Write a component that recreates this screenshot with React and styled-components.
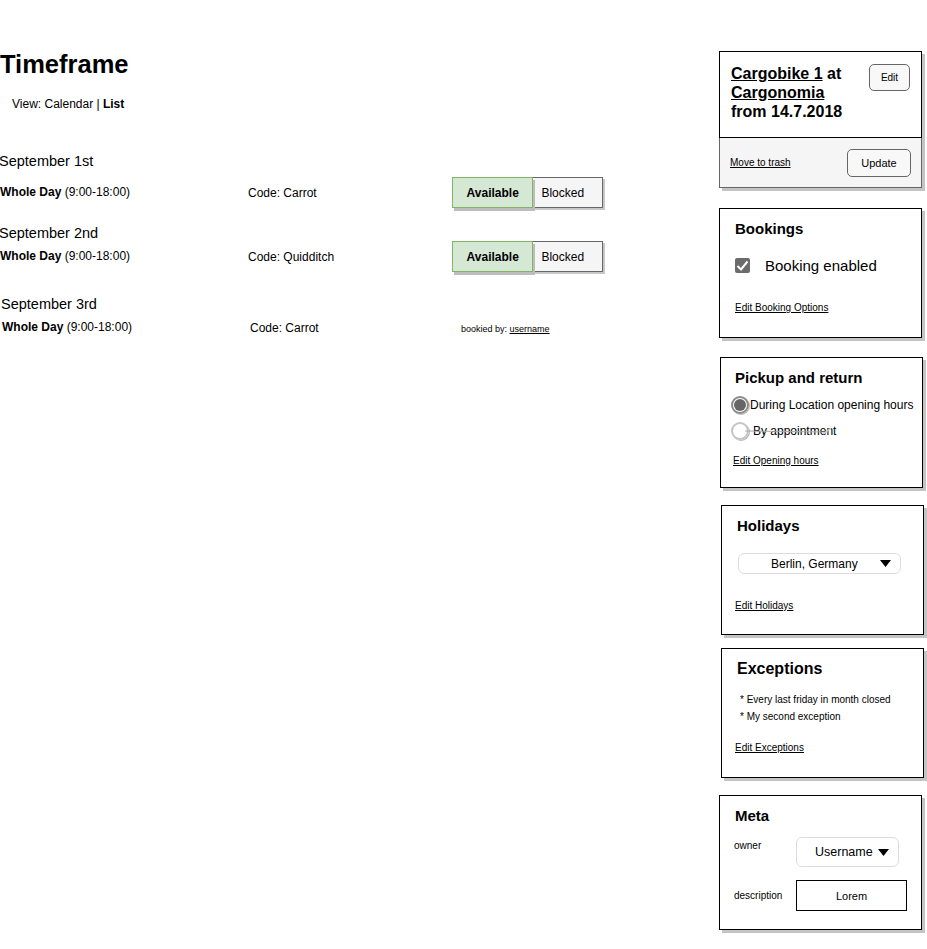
import React from "react";
import styled, { createGlobalStyle } from "styled-components";

const GlobalStyle = createGlobalStyle`
    html, body {
        margin: 0;
        padding: 0;
        background: #fff;
    }
    body {
        font-family: "Liberation Sans", Arial, Helvetica, sans-serif;
        color: #000;
    }
`;

const days = [
    { title: "September 1st", code: "Carrot", status: "toggle", top: 41, gap: 8, shift: 0 },
    { title: "September 2nd", code: "Quidditch", status: "toggle", top: 17, gap: 0, shift: 0 },
    { title: "September 3rd", code: "Carrot", status: "booked", top: 24, gap: 0, shift: 2 },
];

function Arrow() {
    return (
        <svg width="11" height="7" viewBox="0 0 11 7">
            <polygon points="0,0 11,0 5.5,7" fill="#000" />
        </svg>
    );
}

function App() {
    return (
        <>
            <GlobalStyle />
            <Page>
                <Main>
                    <Title>Timeframe</Title>
                    <ViewSwitch>
                        View: Calendar | <b>List</b>
                    </ViewSwitch>
                    {days.map((d) => (
                        <Day key={d.title} top={d.top}>
                            <DayTitle shift={d.shift}>{d.title}</DayTitle>
                            <DayRow gap={d.gap} shift={d.shift}>
                                <Slot>
                                    <b>Whole Day</b> (9:00-18:00)
                                </Slot>
                                <Code>Code: {d.code}</Code>
                                {d.status === "toggle" ? (
                                    <Toggle>
                                        <ToggleOption active>Available</ToggleOption>
                                        <ToggleOption>Blocked</ToggleOption>
                                    </Toggle>
                                ) : (
                                    <Booked>
                                        bookied by: <u>username</u>
                                    </Booked>
                                )}
                            </DayRow>
                        </Day>
                    ))}
                </Main>
                <Sidebar>
                    <ItemPanel>
                        <ItemHead>
                            <ItemTitle>
                                <u>Cargobike 1</u> at
                                <br />
                                <u>Cargonomia</u>
                                <br />
                                from 14.7.2018
                            </ItemTitle>
                            <SmallButton w={41} h={27}>Edit</SmallButton>
                        </ItemHead>
                        <ItemFoot>
                            <Link>Move to trash</Link>
                            <SmallButton w={64} h={28} size={11}>Update</SmallButton>
                        </ItemFoot>
                    </ItemPanel>

                    <Panel top={20} shift={0} h={130}>
                        <PanelTitle>Bookings</PanelTitle>
                        <CheckRow>
                            <CheckBox>
                                <svg width="13" height="11" viewBox="0 0 13 11">
                                    <path d="M1.5 6 L5 9.5 L11.5 1.5" fill="none" stroke="#fff" strokeWidth="2" />
                                </svg>
                            </CheckBox>
                            Booking enabled
                        </CheckRow>
                        <Link top={27}>Edit Booking Options</Link>
                    </Panel>

                    <Panel top={19} shift={1} h={131} pad={14}>
                        <PanelTitle>Pickup and return</PanelTitle>
                        <RadioRow top={9}>
                            <Radio checked />
                            During Location opening hours
                        </RadioRow>
                        <RadioRow top={8} gap={4}>
                            <Radio />
                            By appointment
                            <Connector width="90" height="10" viewBox="0 0 90 10">
                                <path d="M0 6 L84 7" stroke="#aaa" strokeWidth="1" fill="none" />
                                <path d="M78 9 L86 3" stroke="#ccc" strokeWidth="1.5" fill="none" />
                            </Connector>
                        </RadioRow>
                        <Link top={15} left={-2}>Edit Opening hours</Link>
                    </Panel>

                    <Panel top={17} shift={2} h={130}>
                        <PanelTitle>Holidays</PanelTitle>
                        <Select w={163} h={21} top={18} left={1} textLeft={32} size={12}>
                            <span>Berlin, Germany</span>
                            <Arrow />
                        </Select>
                        <Link top={26} left={-2}>Edit Holidays</Link>
                    </Panel>

                    <Panel top={13} shift={2} h={130}>
                        <PanelTitle size={16}>Exceptions</PanelTitle>
                        <ExceptionList>
                            <li>* Every last friday in month closed</li>
                            <li>* My second exception</li>
                        </ExceptionList>
                        <Link top={17} left={-2}>Edit Exceptions</Link>
                    </Panel>

                    <Panel top={17} shift={0} h={135}>
                        <PanelTitle>Meta</PanelTitle>
                        <MetaGrid>
                            <MetaLabel top={3}>owner</MetaLabel>
                            <Select w={103} h={30} textLeft={18} size={12.5}>
                                <span>Username</span>
                                <Arrow />
                            </Select>
                            <MetaLabel>description</MetaLabel>
                            <TextInput>Lorem</TextInput>
                        </MetaGrid>
                    </Panel>
                </Sidebar>
            </Page>
        </>
    );
}

const Page = styled.div`
    display: flex;
    align-items: flex-start;
    width: 927px;
    min-height: 949px;
`;
const Main = styled.div`
    flex: 0 0 719px;
    padding-top: 49px;
`;
const Title = styled.h1`
    margin: 0;
    font-size: 25.5px;
    line-height: 30px;
    font-weight: bold;
`;
const ViewSwitch = styled.div`
    margin: 17px 0 0 12px;
    font-size: 12px;
    line-height: 16px;
`;
const Day = styled.div`
    margin-top: ${(p) => p.top}px;
`;
const DayTitle = styled.div`
    margin-left: ${(p) => p.shift - 1}px;
    font-size: 14.5px;
    line-height: 16px;
`;
const DayRow = styled.div`
    display: grid;
    grid-template-columns: 248px 204px auto;
    align-items: center;
    height: 31px;
    margin-top: ${(p) => p.gap}px;
    margin-left: ${(p) => p.shift}px;
    font-size: 12px;
`;
const Slot = styled.div`
    margin-top: -2px;
`;
const Code = styled.div`
    margin-top: 1px;
`;
const Toggle = styled.div`
    display: flex;
    width: 151px;
    height: 31px;
`;
const ToggleOption = styled.div`
    box-sizing: border-box;
    height: 31px;
    display: flex;
    align-items: center;
    font-size: 12px;
    ${(p) =>
        p.active
            ? `
        width: 82px;
        justify-content: center;
        font-weight: bold;
        background: #d5e8d4;
        border: 1px solid #82b366;
        box-shadow: 2px 3px 0 #bdbdbd;
        position: relative;
        z-index: 1;
    `
            : `
        width: 70px;
        padding-left: 8px;
        background: #f5f5f5;
        border: 1px solid #666;
        border-left: none;
        box-shadow: 2px 2px 0 #c8c8c8;
    `}
`;
const Booked = styled.div`
    margin: 3px 0 0 7px;
    font-size: 9px;
`;

const Sidebar = styled.div`
    flex: 0 0 208px;
    padding-top: 51px;
    display: flex;
    flex-direction: column;
`;
const ItemPanel = styled.div`
    width: 203px;
    box-shadow: 3px 3px 0 #c4c4c4;
`;
const ItemHead = styled.div`
    box-sizing: border-box;
    height: 87px;
    border: 1px solid #000;
    padding: 12px 11px 0 11px;
    display: flex;
    justify-content: space-between;
    align-items: flex-start;
    background: #fff;
`;
const ItemTitle = styled.div`
    font-size: 16px;
    line-height: 19px;
    font-weight: bold;
`;
const SmallButton = styled.div`
    box-sizing: border-box;
    width: ${(p) => p.w}px;
    height: ${(p) => p.h}px;
    border: 1px solid #666;
    border-radius: 5px;
    background: #f8f8f8;
    display: flex;
    align-items: center;
    justify-content: center;
    font-size: ${(p) => p.size || 10}px;
`;
const ItemFoot = styled.div`
    box-sizing: border-box;
    height: 50px;
    border: 1px solid #666;
    border-top: none;
    background: #f5f5f5;
    padding: 0 10px 0 10px;
    display: flex;
    justify-content: space-between;
    align-items: center;
`;
const Panel = styled.div`
    box-sizing: border-box;
    width: 203px;
    height: ${(p) => p.h}px;
    margin-top: ${(p) => p.top}px;
    margin-left: ${(p) => p.shift}px;
    border: 1px solid #000;
    box-shadow: 3px 3px 0 #c4c4c4;
    padding: 11px 8px 0 ${(p) => p.pad || 15}px;
    background: #fff;
`;
const PanelTitle = styled.div`
    font-size: ${(p) => p.size || 15}px;
    line-height: 18px;
    font-weight: bold;
`;
const Link = styled.div`
    margin-top: ${(p) => p.top || 0}px;
    margin-left: ${(p) => p.left || 0}px;
    font-size: 10px;
    line-height: 12px;
    text-decoration: underline;
`;
const CheckRow = styled.div`
    display: flex;
    align-items: center;
    gap: 15px;
    margin-top: 17px;
    height: 20px;
    font-size: 15px;
`;
const CheckBox = styled.span`
    width: 15px;
    height: 15px;
    border-radius: 2px;
    background: #6b6b6b;
    display: flex;
    align-items: center;
    justify-content: center;
`;
const RadioRow = styled.div`
    position: relative;
    display: flex;
    align-items: center;
    gap: ${(p) => p.gap || 1}px;
    height: 18px;
    margin: ${(p) => p.top}px 0 0 -4px;
    font-size: 12px;
    white-space: nowrap;
`;
const Radio = styled.span`
    box-sizing: border-box;
    flex: 0 0 18px;
    width: 18px;
    height: 18px;
    border-radius: 50%;
    border: 2px solid ${(p) => (p.checked ? "#8a8a8a" : "#c4c4c4")};
    box-shadow: 1px 1px 0 #bbb;
    display: flex;
    align-items: center;
    justify-content: center;
    &::after {
        content: "";
        width: 12px;
        height: 12px;
        border-radius: 50%;
        background: ${(p) => (p.checked ? "#666" : "transparent")};
    }
`;
const Connector = styled.svg`
    position: absolute;
    left: 14px;
    top: 3px;
    pointer-events: none;
`;
const Select = styled.div`
    box-sizing: border-box;
    width: ${(p) => p.w}px;
    height: ${(p) => p.h}px;
    margin-top: ${(p) => p.top || 0}px;
    margin-left: ${(p) => p.left || 0}px;
    border: 1px solid #ddd;
    border-radius: 6px;
    display: flex;
    align-items: center;
    justify-content: space-between;
    padding: 0 9px 0 ${(p) => p.textLeft}px;
    font-size: ${(p) => p.size}px;
    white-space: nowrap;
`;
const ExceptionList = styled.ul`
    list-style: none;
    margin: 13px 0 0 3px;
    padding: 0;
    font-size: 10px;
    line-height: 17px;
`;
const MetaGrid = styled.div`
    display: grid;
    grid-template-columns: 62px auto;
    row-gap: 13px;
    margin: 12px 0 0 -1px;
    align-items: start;
`;
const MetaLabel = styled.div`
    font-size: 10px;
    line-height: 12px;
    margin-top: ${(p) => p.top || 0}px;
    align-self: ${(p) => (p.top ? "start" : "center")};
`;
const TextInput = styled.div`
    box-sizing: border-box;
    width: 111px;
    height: 31px;
    border: 1px solid #000;
    display: flex;
    align-items: center;
    justify-content: center;
    font-size: 11px;
`;

export default App;
